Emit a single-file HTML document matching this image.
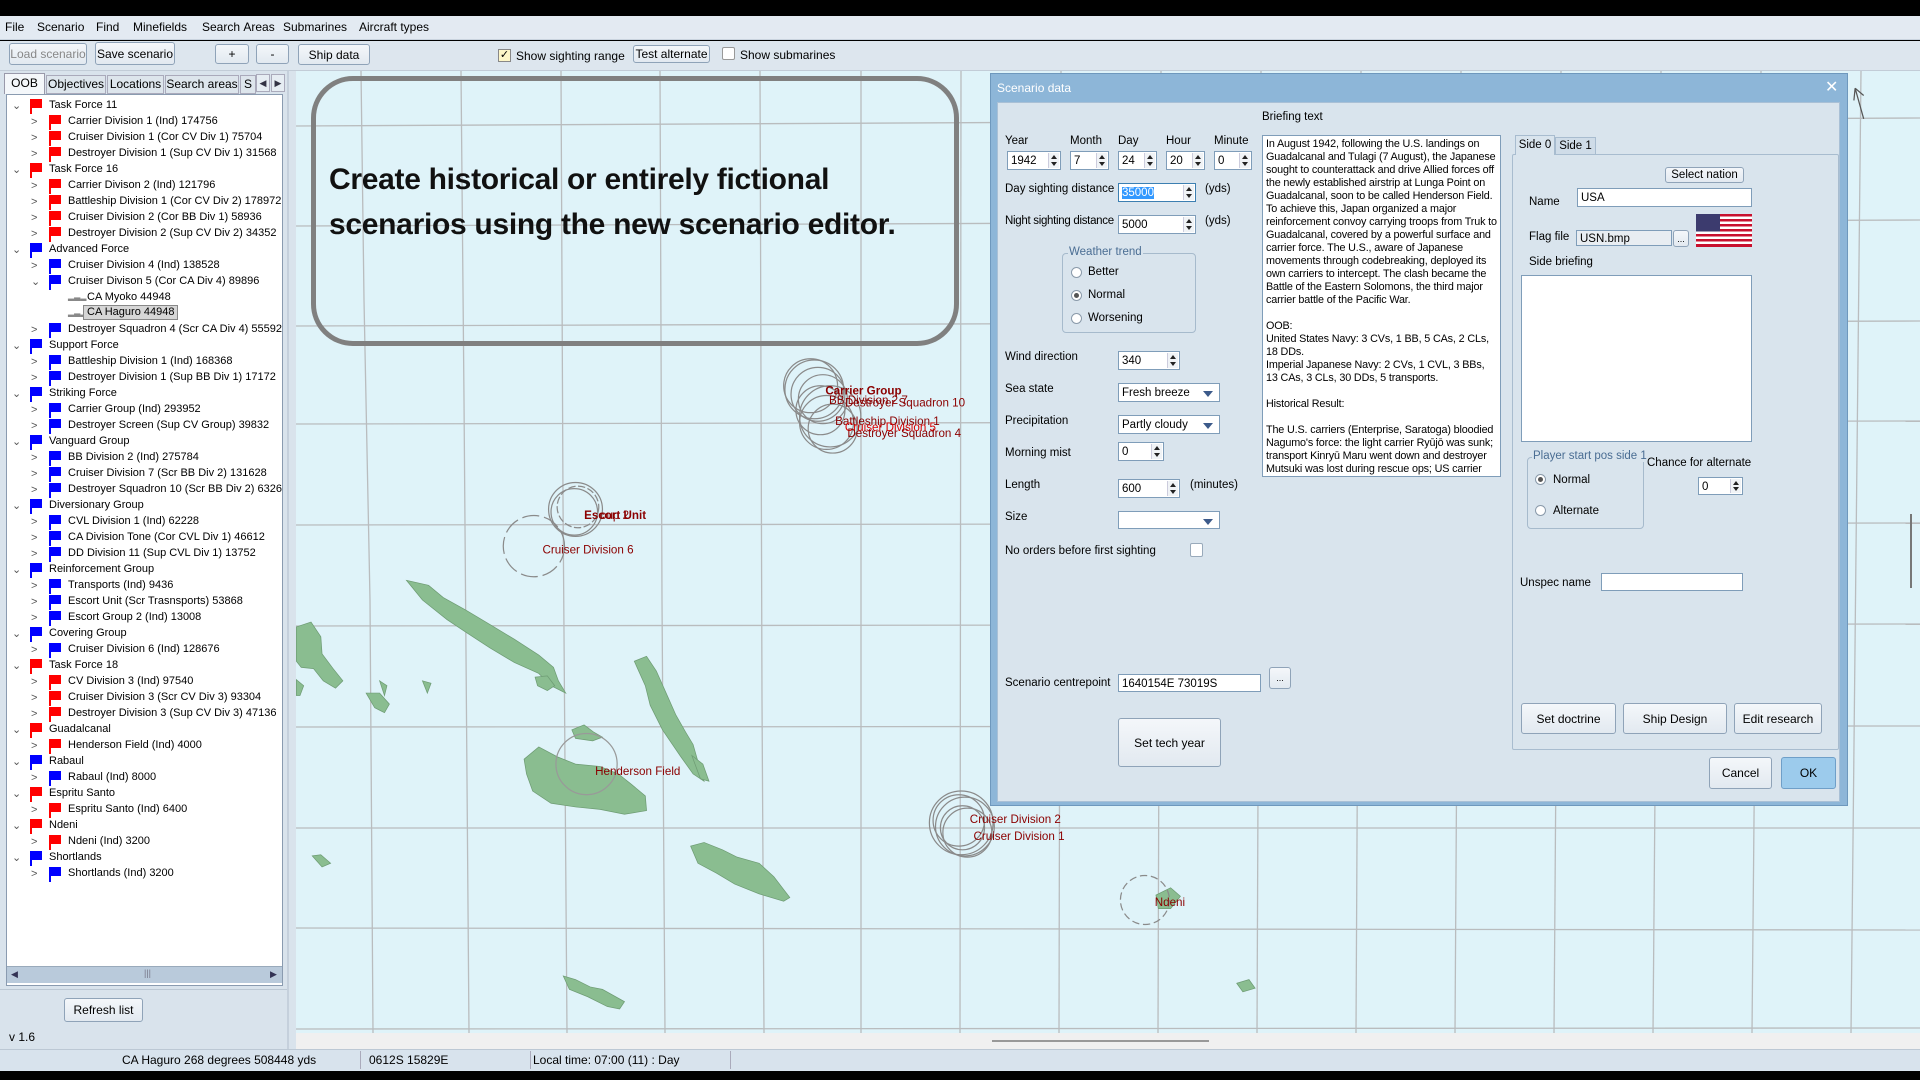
<!DOCTYPE html>
<html><head><meta charset="utf-8"><style>
*{box-sizing:border-box;margin:0;padding:0}
body{width:1920px;height:1080px;overflow:hidden;background:#000;font-family:"Liberation Sans",sans-serif;font-size:12px;color:#000;position:relative}
.a{position:absolute}
.btn{position:absolute;border:1px solid #8fa3b8;border-radius:3px;background:linear-gradient(#f4f7fa,#e2e9f0);display:flex;align-items:center;justify-content:center;font-size:12px}
.inp{position:absolute;background:#fff;border:1px solid #7f9db9;font-size:11.5px;padding:2px 3px;line-height:14px}
.spin{position:absolute;width:11px;top:1px;bottom:1px;right:1px;border-left:1px solid #ccd;background:#f0f3f6}
.spin:before{content:"";position:absolute;left:2px;top:2px;border:3.5px solid transparent;border-bottom:4px solid #222;border-top:0}
.spin:after{content:"";position:absolute;left:2px;bottom:2px;border:3.5px solid transparent;border-top:4px solid #222;border-bottom:0}
.cmb:after{content:"";position:absolute;right:6px;top:7px;border:5px solid transparent;border-top:6px solid #3c5a8a;border-bottom:0}
.lbl{position:absolute;font-size:11.5px;white-space:nowrap}
.radio{position:absolute;width:11px;height:11px;border-radius:50%;border:1px solid #8a9aaa;background:#fff}
.radio.on:after{content:"";position:absolute;left:2px;top:2px;width:5px;height:5px;border-radius:50%;background:#555}
.tree div{position:absolute;height:16px;line-height:16px;font-size:11px;white-space:nowrap}
.tree div.fl{position:absolute;width:12px;height:9px;border-left:2px solid;}
.tree div.pole{position:absolute;width:2px;height:15px}
.chev{position:absolute;font-size:10px;color:#555;top:0}
</style></head><body>
<div class="a" style="left:0;top:16px;width:1920px;height:24px;background:#e3eaf2;border-bottom:1px solid #c9d3de"></div>
<div class="a" style="top:20px;left:5px;font-size:12px;word-spacing:0">
<span style="position:absolute;left:0">File</span><span style="position:absolute;left:32px">Scenario</span><span style="position:absolute;left:91px">Find</span><span style="position:absolute;left:128px">Minefields</span><span style="position:absolute;left:197px">Search&nbsp;Areas</span><span style="position:absolute;left:278px">Submarines</span><span style="position:absolute;left:354px">Aircraft&nbsp;types</span></div>
<div class="a" style="left:0;top:41px;width:1920px;height:30px;background:#dde6ee;border-bottom:1px solid #c2ccd7"></div>
<div class="btn" style="left:9px;top:43px;width:78px;height:22px;color:#888">Load scenario</div>
<div class="btn" style="left:95px;top:42px;width:80px;height:23px">Save scenario</div>
<div class="btn" style="left:215px;top:44px;width:34px;height:20px">+</div>
<div class="btn" style="left:256px;top:44px;width:33px;height:20px">-</div>
<div class="btn" style="left:298px;top:44px;width:72px;height:21px">Ship data</div>
<div class="a" style="left:498px;top:49px;width:13px;height:13px;border:1px solid #888;background:#fdf6c8;font-size:11px;line-height:11px;text-align:center">✓</div>
<div class="lbl" style="left:516px;top:49px;font-size:12px">Show sighting range</div>
<div class="btn" style="left:633px;top:45px;width:77px;height:18px">Test alternate</div>
<div class="a" style="left:722px;top:47px;width:13px;height:13px;border:1px solid #999;background:#fff;border-radius:2px"></div>
<div class="lbl" style="left:740px;top:48px;font-size:12px">Show submarines</div>
<div class="a" style="left:0;top:71px;width:296px;height:979px;background:#d9e3ec"></div>
<div class="a" style="left:287px;top:71px;width:2px;height:979px;background:#c5d0dc"></div>
<div class="a" style="left:4px;top:73px;width:41px;height:21px;background:#f4f7fa;border:1px solid #99a;border-bottom:none;font-size:12px;text-align:center;line-height:19px">OOB</div>
<div class="a" style="left:46px;top:75px;width:60px;height:19px;background:#dde5ec;border:1px solid #aab;font-size:12px;text-align:center;line-height:17px">Objectives</div>
<div class="a" style="left:107px;top:75px;width:57px;height:19px;background:#dde5ec;border:1px solid #aab;font-size:12px;text-align:center;line-height:17px">Locations</div>
<div class="a" style="left:165px;top:75px;width:74px;height:19px;background:#dde5ec;border:1px solid #aab;font-size:12px;text-align:center;line-height:17px">Search areas</div>
<div class="a" style="left:240px;top:75px;width:16px;height:19px;background:#dde5ec;border:1px solid #aab;font-size:12px;padding-left:3px;line-height:17px;overflow:hidden">S</div>
<div class="a" style="left:256px;top:74px;width:14px;height:18px;background:#e6edf3;border:1px solid #aab;color:#334;font-size:9px;text-align:center;line-height:16px">◀</div>
<div class="a" style="left:271px;top:74px;width:14px;height:18px;background:#e6edf3;border:1px solid #aab;color:#334;font-size:9px;text-align:center;line-height:16px">▶</div>
<div class="a" style="left:6px;top:94px;width:277px;height:892px;background:#fff;border:1px solid #8a9bb0"></div>
<div class="a tree" id="tree" style="left:0;top:0;width:282px;height:966px;overflow:hidden"></div>
<div class="a" style="left:7px;top:966px;width:275px;height:17px;background:#b9cadb;border-top:1px solid #9ab"></div>
<div class="a" style="left:11px;top:969px;font-size:9px;color:#335">◀</div>
<div class="a" style="left:270px;top:969px;font-size:9px;color:#335">▶</div>
<div class="a" style="left:144px;top:968px;font-size:9px;color:#778">|||</div>
<div class="a" style="left:0;top:989px;width:287px;height:1px;background:#bcc8d4"></div>
<div class="btn" style="left:64px;top:998px;width:79px;height:24px">Refresh list</div>
<div class="lbl" style="left:9px;top:1030px;font-size:12px">v 1.6</div>
<div class="a" style="left:296px;top:71px;width:1624px;height:962px;background:#dff3f9;overflow:hidden">
<svg width="1624" height="962" viewBox="296 71 1624 962" style="position:absolute;left:0;top:0">
<g stroke="#b9bcbe" stroke-width="1.3" fill="none">
<path d="M361 71 L364 300 L370 600 L373 1033"/><path d="M461 71 L464 400 L469 1033"/><path d="M561 71 L563 500 L567 1033"/><path d="M660 71 L662 600 L665 1033"/><path d="M760 71 L762 700 L764 1033"/><path d="M861 71 L861 1033"/><path d="M961 71 L960 1033"/><path d="M1061 71 L1059 1033"/><path d="M1161 71 L1158 1033"/><path d="M1261 71 L1257 1033"/><path d="M1361 71 L1356 1033"/><path d="M1461 71 L1455 1033"/><path d="M1561 71 L1554 1033"/><path d="M1661 71 L1653 1033"/><path d="M1761 71 L1752 1033"/><path d="M1861 71 L1851 1033"/>
<path d="M296 126 L1920 118"/><path d="M296 226 L1920 220"/><path d="M296 326 L1920 321"/><path d="M296 424 L1920 421"/><path d="M296 525 L1920 523"/><path d="M296 626 L1920 624"/><path d="M296 727 L1920 726"/><path d="M296 828 L1920 828"/><path d="M296 928 L1920 930"/><path d="M296 1029 L1920 1028"/>
</g>
<g transform="scale(1.2245)">
<g fill="#8abd90" stroke="#6e9c74" stroke-width="0.6">
<path d="M332 474 L350 478 L362 488 L380 498 L400 510 L420 522 L440 535 L452 545 L456 556 L462 566 L450 560 L440 550 L420 541 L400 529 L380 516 L365 506 L345 490 Z"/>
<path d="M437 553 L447 552 L453 560 L447 564 L439 560 Z"/>
<path d="M518 540 L528 536 L536 548 L544 566 L552 584 L560 598 L566 608 L570 622 L575 638 L566 632 L556 618 L541 596 L531 576 L527 560 Z"/>
<path d="M565 617 L574 624 L579 638 L572 636 Z"/>
<path d="M428 620 L440 610 L455 618 L470 624 L490 626 L505 632 L515 640 L527 650 L528 662 L510 665 L490 661 L470 659 L450 656 L435 646 L430 632 Z"/>
<path d="M467 596 L477 592 L485 598 L492 602 L484 605 L470 603 Z"/>
<path d="M564 691 L575 688 L590 694 L602 700 L620 705 L632 716 L645 733 L640 736 L620 730 L600 722 L585 713 L570 705 Z"/>
<path d="M460 797 L470 800 L482 806 L492 808 L510 818 L506 824 L496 822 L480 814 L465 808 Z"/>
<path d="M242 512 L254 508 L262 520 L263 534 L272 546 L280 556 L274 562 L264 556 L256 546 L246 545 L242 540 Z"/>
<path d="M299 566 L310 566 L318 575 L314 582 L306 578 Z"/>
<path d="M242 555 L248 560 L245 568 L242 568 Z"/>
<path d="M310 556 L316 560 L314 568 Z"/>
<path d="M345 556 L352 558 L349 566 Z"/>
<path d="M944 731 L956 725 L964 732 L956 742 L946 742 Z"/>
<path d="M1010 803 L1020 800 L1025 807 L1015 810 Z"/>
<path d="M255 699 L262 698 L270 705 L263 708 Z"/>
</g>
<g fill="none" stroke="#8a8a8a" stroke-width="1">
<circle cx="665" cy="318" r="24"/><circle cx="668" cy="322" r="22"/><circle cx="672" cy="326" r="20"/><circle cx="662" cy="315" r="22"/><circle cx="678" cy="340" r="25"/><circle cx="675" cy="345" r="22"/><circle cx="670" cy="335" r="20"/><circle cx="680" cy="350" r="20"/>
<circle cx="470" cy="416" r="22"/><circle cx="469" cy="418" r="19"/><circle cx="472" cy="414" r="17" stroke-dasharray="6 2"/>
<circle cx="436" cy="446" r="25" stroke-dasharray="14 4"/>
<circle cx="479" cy="624" r="25" stroke="#999"/>
<circle cx="785" cy="672" r="26"/><circle cx="788" cy="675" r="24"/><circle cx="783" cy="670" r="21"/><circle cx="790" cy="680" r="20"/><circle cx="786" cy="676" r="18"/>
<circle cx="935" cy="735" r="20" stroke-dasharray="6 3"/>
</g>
<g fill="#8b0000" font-family="Liberation Sans,sans-serif" font-size="9.5">
<text x="443" y="452">Cruiser Division 6</text>
<text x="477" y="424" font-weight="bold">Escort Unit</text><text x="490" y="424">oup 2</text>
<text x="486" y="633">Henderson Field</text>
<text x="943" y="740">Ndeni</text>
<text x="674" y="322" font-weight="bold">Carrier Group</text><text x="677" y="330">BB Division 2 7</text><text x="690" y="332">Destroyer Squadron 10</text>
<text x="682" y="347">Battleship Division 1</text><text x="690" y="352" fill="#d00">Cruiser Division 5</text><text x="692" y="357">Destroyer Squadron 4</text>
<text x="792" y="672">Cruiser Division 2</text><text x="795" y="686">Cruiser Division 1</text>
</g>
<path d="M1515 72 L1522 97 M1515 72 L1514 82 M1515 72 L1522 78" stroke="#555" fill="none"/>
</g>
</svg>
<div class="a" style="left:15px;top:5px;width:648px;height:270px;border:5px solid #808080;border-radius:42px"></div>
<div class="a" style="left:33px;top:86px;font-size:30px;font-weight:bold;line-height:45px;color:#111;letter-spacing:-0.3px">Create historical or entirely fictional<br>scenarios using the new scenario editor.</div>
</div>
<div class="a" style="left:296px;top:1033px;width:1624px;height:16px;background:#f0f0f0"></div>
<div class="a" style="left:992px;top:1040px;width:217px;height:2px;background:#999"></div>
<div class="a" style="left:1910px;top:514px;width:2px;height:74px;background:#777"></div>
<div class="a" style="left:0;top:1049px;width:1920px;height:22px;background:#d8e3ed;border-top:1px solid #bcc8d4"></div>
<div class="lbl" style="left:122px;top:1053px;font-size:12px">CA Haguro 268 degrees 508448 yds</div>
<div class="a" style="left:360px;top:1051px;width:1px;height:18px;background:#aab"></div>
<div class="lbl" style="left:369px;top:1053px;font-size:12px">0612S 15829E</div>
<div class="a" style="left:530px;top:1051px;width:1px;height:18px;background:#aab"></div>
<div class="lbl" style="left:533px;top:1053px;font-size:12px">Local time: 07:00 (11) : Day</div>
<div class="a" style="left:730px;top:1051px;width:1px;height:18px;background:#aab"></div>
<div class="a" style="left:990px;top:73px;width:858px;height:733px;background:#8db6d8;border:1px solid #6e98bd"></div>
<div class="lbl" style="left:997px;top:81px;color:#fff;font-size:12px">Scenario data</div>
<div class="lbl" style="left:1825px;top:77px;color:#fff;font-size:16px">✕</div>
<div class="a" style="left:997px;top:102px;width:843px;height:700px;background:#d9e4ed;border:1px solid #a9c0d6"></div>
<div class="lbl" style="left:1262px;top:111px">Briefing text</div>
<div class="lbl" style="left:1005px;top:135px">Year</div><div class="lbl" style="left:1070px;top:135px">Month</div><div class="lbl" style="left:1118px;top:135px">Day</div><div class="lbl" style="left:1166px;top:135px">Hour</div><div class="lbl" style="left:1214px;top:135px">Minute</div>
<div class="inp" style="left:1007px;top:151px;width:54px;height:19px">1942<i class="spin"></i></div>
<div class="inp" style="left:1070px;top:151px;width:39px;height:19px">7<i class="spin"></i></div>
<div class="inp" style="left:1118px;top:151px;width:39px;height:19px">24<i class="spin"></i></div>
<div class="inp" style="left:1166px;top:151px;width:39px;height:19px">20<i class="spin"></i></div>
<div class="inp" style="left:1214px;top:151px;width:38px;height:19px">0<i class="spin"></i></div>
<div class="lbl" style="left:1005px;top:183px">Day sighting distance</div>
<div class="inp" style="left:1118px;top:183px;width:78px;height:19px;border-color:#3c7fb1"><span style="background:#3399ff;color:#fff">35000</span><i class="spin"></i></div>
<div class="lbl" style="left:1205px;top:183px">(yds)</div>
<div class="lbl" style="left:1005px;top:215px;letter-spacing:-0.3px">Night sighting distance</div>
<div class="inp" style="left:1118px;top:215px;width:78px;height:19px">5000<i class="spin"></i></div>
<div class="lbl" style="left:1205px;top:215px">(yds)</div>
<div class="a" style="left:1062px;top:253px;width:134px;height:80px;border:1px solid #a6bacc;border-radius:4px"></div>
<div class="lbl" style="left:1068px;top:246px;background:#d9e4ed;color:#4a6d93;padding:0 1px">Weather trend</div>
<div class="radio" style="left:1071px;top:267px"></div><div class="lbl" style="left:1088px;top:266px">Better</div>
<div class="radio on" style="left:1071px;top:290px"></div><div class="lbl" style="left:1088px;top:289px">Normal</div>
<div class="radio" style="left:1071px;top:313px"></div><div class="lbl" style="left:1088px;top:312px">Worsening</div>
<div class="lbl" style="left:1005px;top:351px">Wind direction</div>
<div class="inp" style="left:1118px;top:351px;width:62px;height:19px">340<i class="spin"></i></div>
<div class="lbl" style="left:1005px;top:383px">Sea state</div>
<div class="inp cmb" style="left:1118px;top:383px;width:102px;height:19px">Fresh breeze</div>
<div class="lbl" style="left:1005px;top:415px">Precipitation</div>
<div class="inp cmb" style="left:1118px;top:415px;width:102px;height:19px">Partly cloudy</div>
<div class="lbl" style="left:1005px;top:447px">Morning mist</div>
<div class="inp" style="left:1118px;top:442px;width:46px;height:19px">0<i class="spin"></i></div>
<div class="lbl" style="left:1005px;top:479px">Length</div>
<div class="inp" style="left:1118px;top:479px;width:62px;height:19px">600<i class="spin"></i></div>
<div class="lbl" style="left:1190px;top:479px">(minutes)</div>
<div class="lbl" style="left:1005px;top:511px">Size</div>
<div class="inp cmb" style="left:1118px;top:511px;width:102px;height:18px"></div>
<div class="lbl" style="left:1005px;top:545px">No orders before first sighting</div>
<div class="a" style="left:1190px;top:543px;width:13px;height:14px;background:#fff;border:1px solid #9ab;border-radius:2px"></div>
<div class="inp" style="left:1262px;top:135px;width:239px;height:342px;font-size:10.8px;line-height:13px;padding:2px 3px;overflow:hidden;letter-spacing:-0.15px">In August 1942, following the U.S. landings on Guadalcanal and Tulagi (7 August), the Japanese sought to counterattack and drive Allied forces off the newly established airstrip at Lunga Point on Guadalcanal, soon to be called Henderson Field. To achieve this, Japan organized a major reinforcement convoy carrying troops from Truk to Guadalcanal, covered by a powerful surface and carrier force. The U.S., aware of Japanese movements through codebreaking, deployed its own carriers to intercept. The clash became the Battle of the Eastern Solomons, the third major carrier battle of the Pacific War.<br><br>OOB:<br>United States Navy: 3 CVs, 1 BB, 5 CAs, 2 CLs, 18 DDs.<br>Imperial Japanese Navy: 2 CVs, 1 CVL, 3 BBs, 13 CAs, 3 CLs, 30 DDs, 5 transports.<br><br>Historical Result:<br><br>The U.S. carriers (Enterprise, Saratoga) bloodied Nagumo's force: the light carrier Ryūjō was sunk; transport Kinryū Maru went down and destroyer Mutsuki was lost during rescue ops; US carrier</div>
<div class="a" style="left:1512px;top:154px;width:327px;height:596px;border:1px solid #a8bccf;border-radius:2px"></div>
<div class="a" style="left:1515px;top:135px;width:40px;height:20px;background:#d9e4ed;border:1px solid #a8bccf;border-bottom:none;font-size:11.5px;text-align:center;line-height:18px">Side 0</div>
<div class="a" style="left:1555px;top:137px;width:41px;height:18px;background:#cfdce8;border:1px solid #a8bccf;font-size:11.5px;text-align:center;line-height:17px">Side 1</div>
<div class="btn" style="left:1665px;top:167px;width:79px;height:16px;font-size:11.5px">Select nation</div>
<div class="lbl" style="left:1529px;top:196px">Name</div>
<div class="inp" style="left:1577px;top:188px;width:175px;height:19px">USA</div>
<div class="lbl" style="left:1529px;top:231px">Flag file</div>
<div class="inp" style="left:1576px;top:230px;width:96px;height:16px;background:#e8edf2;padding-top:1px">USN.bmp</div>
<div class="btn" style="left:1673px;top:230px;width:16px;height:17px;font-size:9px">...</div>
<svg class="a" style="left:1696px;top:214px" width="56" height="33" viewBox="0 0 56 33"><rect width="56" height="33" fill="#fff"/><g fill="#c8102e"><rect y="0" width="56" height="2.5"/><rect y="5" width="56" height="2.5"/><rect y="10" width="56" height="2.5"/><rect y="15" width="56" height="2.5"/><rect y="20" width="56" height="2.5"/><rect y="25" width="56" height="2.5"/><rect y="30" width="56" height="3"/></g><rect width="24" height="17.5" fill="#3c3b6e"/></svg>
<div class="lbl" style="left:1529px;top:256px">Side briefing</div>
<div class="inp" style="left:1521px;top:275px;width:231px;height:167px"></div>
<div class="a" style="left:1527px;top:457px;width:117px;height:72px;border:1px solid #a6bacc;border-radius:4px"></div>
<div class="lbl" style="left:1532px;top:450px;background:#d9e4ed;color:#4a6d93;padding:0 1px">Player start pos side 1</div>
<div class="radio on" style="left:1535px;top:474px"></div><div class="lbl" style="left:1553px;top:474px">Normal</div>
<div class="radio" style="left:1535px;top:505px"></div><div class="lbl" style="left:1553px;top:505px">Alternate</div>
<div class="lbl" style="left:1647px;top:457px">Chance for alternate</div>
<div class="inp" style="left:1698px;top:477px;width:45px;height:18px">0<i class="spin"></i></div>
<div class="lbl" style="left:1520px;top:577px">Unspec name</div>
<div class="inp" style="left:1601px;top:573px;width:142px;height:18px"></div>
<div class="lbl" style="left:1005px;top:677px">Scenario centrepoint</div>
<div class="inp" style="left:1118px;top:674px;width:143px;height:18px">1640154E 73019S</div>
<div class="btn" style="left:1269px;top:667px;width:22px;height:22px;font-size:9px">...</div>
<div class="btn" style="left:1118px;top:718px;width:103px;height:49px">Set tech year</div>
<div class="btn" style="left:1521px;top:703px;width:95px;height:31px">Set doctrine</div>
<div class="btn" style="left:1623px;top:703px;width:104px;height:31px">Ship Design</div>
<div class="btn" style="left:1734px;top:703px;width:88px;height:31px">Edit research</div>
<div class="btn" style="left:1709px;top:757px;width:63px;height:32px">Cancel</div>
<div class="btn" style="left:1781px;top:757px;width:55px;height:32px;background:#9ccbec;border-color:#6f9fc8">OK</div>
<script>
var d=[[0,'r','Task Force 11'],[1,'r','Carrier Division 1 (Ind) 174756'],[1,'r','Cruiser Division 1 (Cor CV Div 1) 75704'],[1,'r','Destroyer Division 1 (Sup CV Div 1) 31568'],[0,'r','Task Force 16'],[1,'r','Carrier Divison 2 (Ind) 121796'],[1,'r','Battleship Division 1 (Cor CV Div 2) 178972'],[1,'r','Cruiser Division 2 (Cor BB Div 1) 58936'],[1,'r','Destroyer Division 2 (Sup CV Div 2) 34352'],[0,'b','Advanced Force'],[1,'b','Cruiser Division 4 (Ind) 138528'],[1,'b','Cruiser Divison 5 (Cor CA Div 4) 89896',1],[2,'s','CA Myoko 44948'],[2,'s','CA Haguro 44948',2],[1,'b','Destroyer Squadron 4 (Scr CA Div 4) 55592'],[0,'b','Support Force'],[1,'b','Battleship Division 1 (Ind) 168368'],[1,'b','Destroyer Division 1 (Sup BB Div 1) 17172'],[0,'b','Striking Force'],[1,'b','Carrier Group (Ind) 293952'],[1,'b','Destroyer Screen (Sup CV Group) 39832'],[0,'b','Vanguard Group'],[1,'b','BB Division 2 (Ind) 275784'],[1,'b','Cruiser Division 7 (Scr BB Div 2) 131628'],[1,'b','Destroyer Squadron 10 (Scr BB Div 2) 63268'],[0,'b','Diversionary Group'],[1,'b','CVL Division 1 (Ind) 62228'],[1,'b','CA Division Tone (Cor CVL Div 1) 46612'],[1,'b','DD Division 11 (Sup CVL Div 1) 13752'],[0,'b','Reinforcement Group'],[1,'b','Transports (Ind) 9436'],[1,'b','Escort Unit (Scr Trasnsports) 53868'],[1,'b','Escort Group 2 (Ind) 13008'],[0,'b','Covering Group'],[1,'b','Cruiser Division 6 (Ind) 128676'],[0,'r','Task Force 18'],[1,'r','CV Division 3 (Ind) 97540'],[1,'r','Cruiser Division 3 (Scr CV Div 3) 93304'],[1,'r','Destroyer Division 3 (Sup CV Div 3) 47136'],[0,'r','Guadalcanal'],[1,'r','Henderson Field (Ind) 4000'],[0,'b','Rabaul'],[1,'b','Rabaul (Ind) 8000'],[0,'r','Espritu Santo'],[1,'r','Espritu Santo (Ind) 6400'],[0,'r','Ndeni'],[1,'r','Ndeni (Ind) 3200'],[0,'b','Shortlands'],[1,'b','Shortlands (Ind) 3200']];
var h='';d.forEach(function(e,i){var y=97+i*16,l=e[0];var cx=l==0?12:31,fx=l==0?30:49,tx=l==0?49:68;
if(l<2)h+='<div class="chev" style="left:'+cx+'px;top:'+(y+1)+'px">'+((l==0||e[3]==1)?'&#8964;':'&gt;')+'</div>';
if(l<2){var c=e[1]=='r'?'#f00':'#00f';h+='<div class="fl" style="left:'+fx+'px;top:'+(y+2)+'px;background:'+c+';border-color:'+c+'"></div><div class="pole" style="left:'+fx+'px;top:'+(y+2)+'px;background:'+c+'"></div>';}
else h+='<div style="left:68px;top:'+y+'px;width:16px;font-size:8px;color:#888">▂▃▂</div>';
if(l==2)tx=87;
var st=e[3]==2?'background:#d6d6d6;border:1px solid #888;padding:0 3px;left:'+(tx-4)+'px;height:15px;line-height:13px;':'left:'+tx+'px;';
h+='<div style="'+st+'top:'+y+'px">'+e[2]+'</div>';});
document.getElementById('tree').innerHTML=h;
</script>
</body></html>
